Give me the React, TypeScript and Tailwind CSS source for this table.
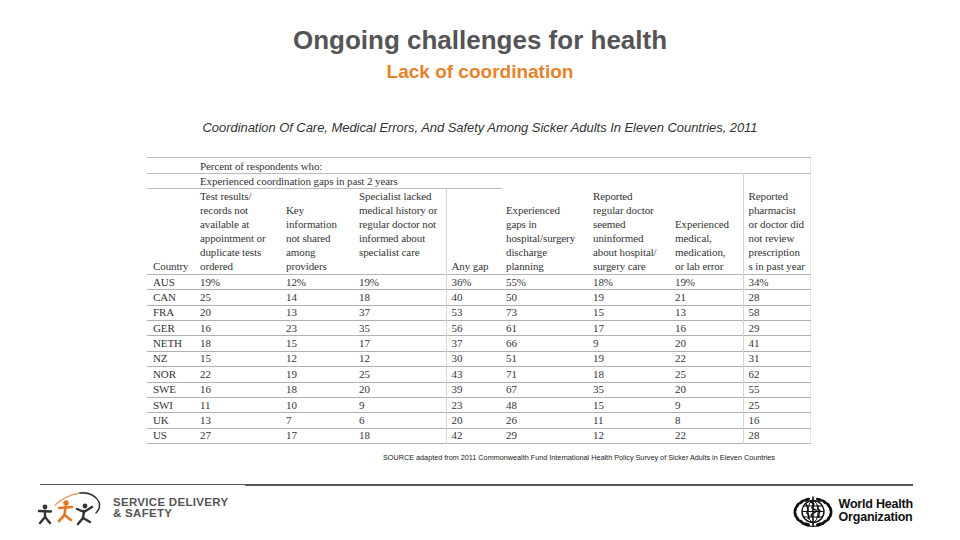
const headers: string[][] = [
  ["Country"],
  ["Test results/", "records not", "available at", "appointment or", "duplicate tests", "ordered"],
  ["Key", "information", "not shared", "among", "providers"],
  ["Specialist lacked", "medical history or", "regular doctor not", "informed about", "specialist care", "\u00a0"],
  ["Any gap"],
  ["Experienced", "gaps in", "hospital/surgery", "discharge", "planning"],
  ["Reported", "regular doctor", "seemed", "uninformed", "about hospital/", "surgery care"],
  ["Experienced", "medical,", "medication,", "or lab error"],
  ["Reported", "pharmacist", "or doctor did", "not review", "prescription", "s in past year"],
];

const rows: string[][] = [
  ["AUS", "19%", "12%", "19%", "36%", "55%", "18%", "19%", "34%"],
  ["CAN", "25", "14", "18", "40", "50", "19", "21", "28"],
  ["FRA", "20", "13", "37", "53", "73", "15", "13", "58"],
  ["GER", "16", "23", "35", "56", "61", "17", "16", "29"],
  ["NETH", "18", "15", "17", "37", "66", "9", "20", "41"],
  ["NZ", "15", "12", "12", "30", "51", "19", "22", "31"],
  ["NOR", "22", "19", "25", "43", "71", "18", "25", "62"],
  ["SWE", "16", "18", "20", "39", "67", "35", "20", "55"],
  ["SWI", "11", "10", "9", "23", "48", "15", "9", "25"],
  ["UK", "13", "7", "6", "20", "26", "11", "8", "16"],
  ["US", "27", "17", "18", "42", "29", "12", "22", "28"],
];

const widths = [49, 86, 73, 91, 56, 87, 82, 72, 68];

function cellClass(i: number) {
  if (i === 0) return "pl-[6px]";
  if (i === 4) return "pl-[5px] border-l border-l-[#d4d4d4]";
  if (i === 8) return "pl-[5px] border-l border-l-[#d4d4d4]";
  return "pl-[4px]";
}

function SdsLogo() {
  return (
    <svg width="66" height="40" viewBox="0 0 66 40" fill="none" strokeLinecap="round" strokeLinejoin="round">
      <path d="M19 17 Q30 7 44 5" stroke="#e2a56b" strokeWidth="1.6" />
      <path d="M44 5 Q58 4 63 14 Q65 20 60 25" stroke="#3a3a3a" strokeWidth="1.6" />
      <g stroke="#333" strokeWidth="2.4">
        <circle cx="9" cy="19" r="2.4" fill="#333" stroke="none" />
        <path d="M3 23 L15 23.5" />
        <path d="M9 23 L9 29" />
        <path d="M9 29 L4 35" />
        <path d="M9 29 L14 35" />
      </g>
      <g stroke="#e87722" strokeWidth="2.6">
        <circle cx="30" cy="15" r="2.7" fill="#e87722" stroke="none" />
        <path d="M23 20 L36 19" />
        <path d="M29.5 19 L28.5 27" />
        <path d="M28.5 27 L23 33" />
        <path d="M28.5 27 L35 32" />
      </g>
      <g stroke="#333" strokeWidth="2.4">
        <circle cx="49" cy="18" r="2.4" fill="#333" stroke="none" />
        <path d="M41 21 L48 24 L56 19" />
        <path d="M48 23 L47 30" />
        <path d="M47 30 L42 36" />
        <path d="M47 30 L54 34" />
      </g>
    </svg>
  );
}

function WhoEmblem() {
  const left = [110, 130, 150, 170, 190, 210, 230, 250];
  const right = [70, 50, 30, 10, -10, -30, -50, -70];
  const leaf = (deg: number, key: string) => {
    const a = (deg * Math.PI) / 180;
    const x = 23 + 18 * Math.cos(a);
    const y = 16 + 13 * Math.sin(a);
    return (
      <ellipse key={key} cx={x} cy={y} rx="3.4" ry="1.5" fill="#111" transform={`rotate(${deg + 90} ${x} ${y})`} />
    );
  };
  return (
    <svg width="46" height="32" viewBox="0 0 46 32" fill="none">
      {left.map((d) => leaf(d, "l" + d))}
      {right.map((d) => leaf(d, "r" + d))}
      <path d="M12 28 Q23 33 34 28" stroke="#111" strokeWidth="1.2" />
      <circle cx="23" cy="15.5" r="11" stroke="#111" strokeWidth="1.4" />
      <ellipse cx="23" cy="15.5" rx="5" ry="11" stroke="#111" strokeWidth="1" />
      <path d="M12 15.5 H34 M13.5 10 H32.5 M13.5 21 H32.5" stroke="#111" strokeWidth="1" />
      <path d="M16 8 Q19 12 17 17 Q20 20 18 23 M28 9 Q27 13 30 15 Q28 19 29 22" stroke="#111" strokeWidth="1.6" />
      <path d="M23 0.5 V31" stroke="#111" strokeWidth="1.6" />
      <path d="M20 6 Q26 7.5 23 10 Q20 12.5 26 14 Q27 16 23 17.5 Q19 19 23 21" stroke="#111" strokeWidth="1.3" />
    </svg>
  );
}

export default function App() {
  return (
    <div className="flex h-[540px] w-[960px] flex-col bg-white font-['Liberation_Sans',Arial,sans-serif]">
      <h1 className="mt-[25px] text-center text-[26px] font-bold leading-[30px] text-[#555555]">
        Ongoing challenges for health
      </h1>
      <h2 className="mt-[6px] text-center text-[19px] font-bold leading-[22px] text-[#e8822a]">
        Lack of coordination
      </h2>
      <p className="mt-[37px] text-center text-[13px] italic leading-[16px] tracking-[-0.05px] text-[#333333]">
        Coordination Of Care, Medical Errors, And Safety Among Sicker Adults In Eleven Countries, 2011
      </p>

      <div className="ml-[147px] mt-[21px] w-[664px] border-r border-r-[#e6e6e6] font-['Liberation_Serif','DejaVu_Serif',serif] text-[11px] tracking-[-0.1px] text-[#353535]">
        <table className="w-[664px] table-fixed border-collapse">
          <colgroup>
            {widths.map((w, i) => (
              <col key={i} style={{ width: w }} />
            ))}
          </colgroup>
          <tbody>
            <tr className="h-[16px] border-y border-y-[#bdbdbd]">
              <td />
              <td colSpan={8} className="whitespace-nowrap p-0 pl-[4px] align-middle leading-[14px]">
                Percent of respondents who:
              </td>
            </tr>
            <tr className="h-[15px]">
              <td className="border-b border-b-[#bdbdbd] p-0" />
              <td colSpan={4} className="whitespace-nowrap border-b border-b-[#bdbdbd] p-0 pl-[4px] align-middle leading-[14px]">
                Experienced coordination gaps in past 2 years
              </td>
              <td colSpan={3} className="p-0" />
              <td className="border-l border-l-[#d4d4d4] p-0" />
            </tr>
            <tr className="h-[86px] border-b border-b-[#b5b5b5]">
              {headers.map((lines, i) => (
                <td key={i} className={`p-0 pb-[1px] align-bottom leading-[14px] whitespace-nowrap ${cellClass(i)}`}>
                  {lines.map((l, j) => (
                    <div key={j}>{l}</div>
                  ))}
                </td>
              ))}
            </tr>
            {rows.map((r) => (
              <tr key={r[0]} className="h-[15.36px] border-b border-b-[#b0b0b0]">
                {r.map((v, i) => (
                  <td key={i} className={`p-0 align-middle leading-[13px] ${cellClass(i)}`}>
                    {v}
                  </td>
                ))}
              </tr>
            ))}
          </tbody>
        </table>
      </div>

      <p className="ml-[383px] mt-[9px] whitespace-nowrap text-[7.25px] leading-[9px] text-[#222222]">
        SOURCE adapted from 2011 Commonwealth Fund International Health Policy Survey of Sicker Adults in Eleven Countries
      </p>

      <div className="mt-[22px] flex items-start">
        <div className="ml-[40px] h-px w-[205px] bg-[#555555]" />
        <div className="h-[2px] w-[668px] bg-[#555555]" />
      </div>

      <div className="mt-[2px] flex items-start justify-between">
        <div className="ml-[36px] flex items-start">
          <SdsLogo />
          <div className="ml-[11px] mt-[9px] text-[11.5px] font-bold leading-[11px] tracking-[0.3px] text-[#555555]">
            <div>SERVICE DELIVERY</div>
            <div>&amp; SAFETY</div>
          </div>
        </div>
        <div className="mr-[47px] mt-[8px] flex items-start">
          <WhoEmblem />
          <div className="ml-[3px] mt-[2px] text-[12.5px] font-bold leading-[13px] tracking-[-0.2px] text-[#111111]">
            <div>World Health</div>
            <div>Organization</div>
          </div>
        </div>
      </div>
    </div>
  );
}
